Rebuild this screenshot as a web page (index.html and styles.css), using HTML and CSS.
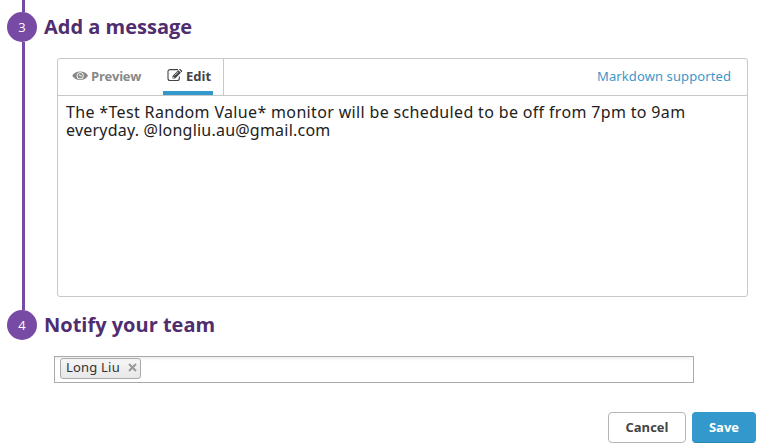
FILE: index.html
```html
<!DOCTYPE html>
<html lang="en">
<head>
<meta charset="utf-8">
<title>Monitor setup</title>
<link rel="stylesheet" href="styles.css">
</head>
<body>
<main class="steps">
  <section class="step step-message">
    <div class="rail"><span class="rail-top"></span><span class="number">3</span><span class="rail-line"></span></div>
    <div class="content">
      <h2 class="title title-message">Add a message</h2>
      <div class="editor">
        <div class="toolbar">
          <div class="tabs">
            <a class="tab tab-preview">
              <svg class="icon-eye" width="16" height="10" viewBox="0 0 16 10"><path d="M.2 4.800C2 2 4.600.6 8.200.6S14.400 2 16 4.800C14.400 7.600 11.800 9 8.200 9S2 7.600.2 4.800Z" fill="currentColor"/><circle cx="8.200" cy="4.800" r="3.500" fill="#fff"/><circle cx="8.200" cy="4.700" r="2.600" fill="currentColor"/><path d="M7.800 3.200V4.900H9.800" fill="none" stroke="#fff" stroke-width=".9"/></svg>
              <span class="preview-label">Preview</span>
            </a>
            <a class="tab tab-edit">
              <svg class="icon-edit" width="16" height="13" viewBox="0 0 16 13"><path d="M11 .6H3A2 2 0 0 0 1 2.600V9.500A2 2 0 0 0 3 11.500H10.300A2 2 0 0 0 12.300 9.500V7.500" fill="none" stroke="currentColor" stroke-width="1.100"/><path d="M5.500 9.600V7L11.300 1.200 13.900 3.800 8.100 9.600ZM12 .6 12.500.2Q13 -.2 13.600.2L15.100 1.700Q15.500 2.200 15.100 2.700L14.500 3.200Z" fill="currentColor"/><path d="M7.800 6.400 11.200 3M6.300 7.700V8.800H7.400" stroke="#fff" stroke-width=".7" fill="none"/></svg>
              <span class="edit-label">Edit</span>
            </a>
          </div>
          <a class="markdown">Markdown supported</a>
        </div>
        <div class="message"><div class="line-one">The *Test Random Value* monitor will be scheduled to be off from 7pm to 9am</div><div class="line-two">everyday. @longliu.au@gmail.com</div></div>
      </div>
    </div>
  </section>
  <section class="step">
    <div class="rail"><span class="number">4</span></div>
    <div class="content">
      <h2 class="title title-notify">Notify your team</h2>
      <div class="recipients">
        <span class="chip"><span class="chip-name">Long Liu</span><svg width="9" height="9" viewBox="0 0 9 9"><path d="M1 1 8 8M8 1 1 8" stroke="#999" stroke-width="2"/></svg></span>
      </div>
      <div class="actions">
        <button class="button cancel"><span class="cancel-label">Cancel</span></button>
        <button class="button save"><span class="save-label">Save</span></button>
      </div>
    </div>
  </section>
</main>
</body>
</html>
```
FILE: styles.css
```css
* { box-sizing: border-box; }
body { margin: 0; background: #fff; font-family: "Open Sans", sans-serif; overflow: hidden; }
.steps { width: 764px; height: 448px; padding-left: 7px; }
.step { display: flex; }
.step-message { height: 310px; }
.rail { width: 30px; flex: none; display: flex; flex-direction: column; align-items: center; }
.rail-top, .rail-line { width: 3px; margin-left: 2px; background: #774aa4; }
.rail-top { height: 12px; }
.rail-line { flex: 1; }
.number { width: 30px; height: 30px; flex: none; border-radius: 50%; background: #774aa4; color: #fff; font-size: 13px; line-height: 30px; text-align: center; }
.content { width: 720px; flex: none; }
.title { margin: 0 0 0 7px; font-size: 20px; line-height: 30px; font-weight: 700; color: #4f2d6f; white-space: nowrap; }
.title-message { margin-top: 12px; }
.editor { width: 691px; height: 239px; margin: 16px 0 0 20px; border: 1px solid #c8c8c8; border-radius: 3px; }
.toolbar { height: 37px; display: flex; justify-content: space-between; border-bottom: 1px solid #c8c8c8; }
.tabs { width: 166px; display: flex; border-right: 1px solid #c8c8c8; }
.tab { display: flex; font-size: 13px; font-weight: 700; line-height: 35px; }
.tab-preview { margin-left: 14px; width: 91px; color: #888; }
.preview-label { letter-spacing: -.25px; }
.icon-eye { margin: 12px 3px 0 0; }
.tab-edit { width: 50px; padding-left: 4px; color: #444; border-bottom: 4px solid #3399cc; height: 36px; }
.icon-edit { margin: 10px 3px 0 0; overflow: visible; }
.markdown { margin-right: 16px; font-family: "Noto Sans", sans-serif; font-size: 13px; line-height: 35px; letter-spacing: .1px; color: #3c97ca; white-space: nowrap; }
.message { padding: 7px 0 0 8px; font-family: "Noto Sans", sans-serif; font-size: 16px; line-height: 18px; color: #222; white-space: nowrap; }
.line-one { letter-spacing: .34px; }
.line-two { letter-spacing: .22px; }
.recipients { width: 640px; height: 27px; margin: 16px 0 0 17px; padding: 1px 0 0 5px; border: 1px solid #aaa; background: linear-gradient(#eee 0, #fff 4px); }
.chip { width: 81px; height: 21px; display: flex; align-items: center; padding: 0 3px 2px 5px; justify-content: space-between; border: 1px solid #aaa; border-radius: 3px; background: linear-gradient(#f4f4f4 20%, #eee 50%, #e8e8e8); font-family: "Noto Sans", sans-serif; font-size: 13px; line-height: 17px; color: #333; }
.chip-name { letter-spacing: .2px; }
.actions { margin: 29px 0 0 571px; display: flex; gap: 6px; }
.button { height: 31px; padding: 0; border-radius: 4px; font: 700 13px/27px "Open Sans", sans-serif; }
.cancel { width: 78px; border: 1px solid #b4b4b4; background: #fff; color: #444; }
.save { width: 64px; border: 1px solid #3399cc; border-bottom-color: #2886b5; background: #3399cc; color: #fff; }
```
